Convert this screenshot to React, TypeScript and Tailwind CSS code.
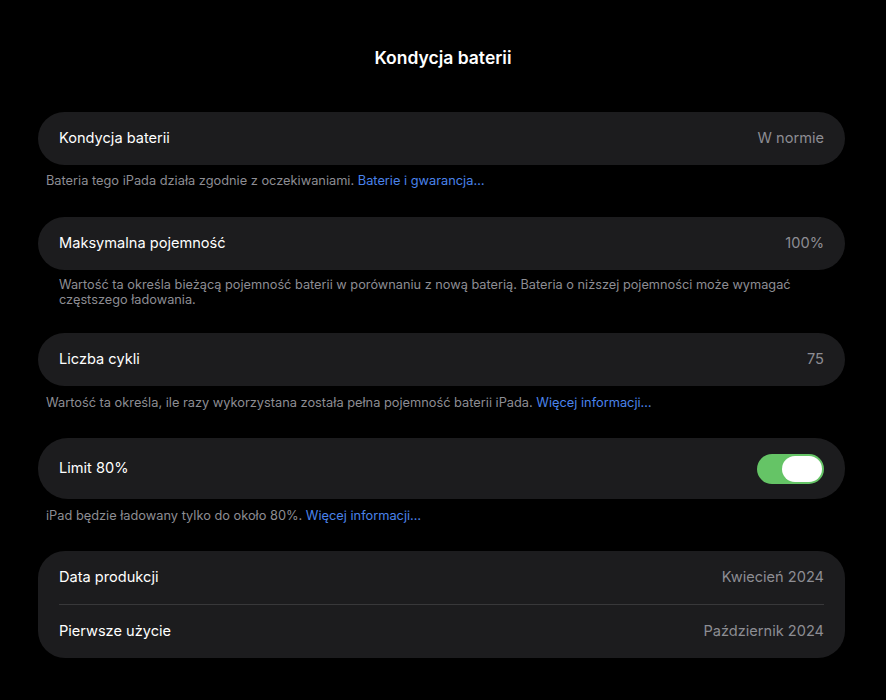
import React from "react";

function Row({ label, value }: { label: string; value: string }) {
  return (
    <div className="flex h-[53px] items-center justify-between px-[21px] pt-[1px]">
      <span className="text-[14.6px] text-white">{label}</span>
      <span className="text-[14.6px] text-[#8d8d93]">{value}</span>
    </div>
  );
}

export default function App() {
  return (
    <div
      className="min-h-[700px] w-full bg-black pb-10"
      style={{ fontFamily: "Inter, 'Noto Sans', sans-serif" }}
    >
      <div className="flex h-[112px] items-start justify-center pt-[45px]">
        <h1 className="text-[17.5px] font-semibold text-white">Kondycja baterii</h1>
      </div>

      <div className="pl-[38px] pr-[41px]">
        <div className="rounded-[27px] bg-[#1c1c1e]">
          <Row label="Kondycja baterii" value="W normie" />
        </div>
        <p className="mt-[8px] h-[44px] px-[8px] text-[12.8px] leading-[16px] text-[#8d8d93]">
          Bateria tego iPada działa zgodnie z oczekiwaniami.{" "}
          <span className="text-[#4a83ea]">Baterie i gwarancja…</span>
        </p>

        <div className="rounded-[27px] bg-[#1c1c1e]">
          <Row label="Maksymalna pojemność" value="100%" />
        </div>
        <p className="mt-[7px] h-[56px] px-[21px] text-[12.75px] leading-[15px] text-[#8d8d93]">
          Wartość ta określa bieżącą pojemność baterii w porównaniu z nową baterią. Bateria o niższej pojemności może wymagać częstszego ładowania.
        </p>

        <div className="rounded-[27px] bg-[#1c1c1e]">
          <Row label="Liczba cykli" value="75" />
        </div>
        <p className="mt-[9px] h-[43px] px-[8px] text-[12.8px] leading-[16px] text-[#8d8d93]">
          Wartość ta określa, ile razy wykorzystana została pełna pojemność baterii iPada.{" "}
          <span className="text-[#4a83ea]">Więcej informacji…</span>
        </p>

        <div className="flex h-[61px] items-center justify-between rounded-[30px] bg-[#1c1c1e] px-[21px]">
          <span className="text-[14.6px] text-white">Limit 80%</span>
          <div className="flex h-[30px] w-[67px] items-center justify-end rounded-full bg-[#65c466] p-[2px]">
            <div className="h-[26px] w-[40px] rounded-full bg-white" />
          </div>
        </div>
        <p className="mt-[9px] h-[43px] px-[8px] text-[12.8px] leading-[16px] text-[#8d8d93]">
          iPad będzie ładowany tylko do około 80%.{" "}
          <span className="text-[#4a83ea]">Więcej informacji…</span>
        </p>

        <div className="rounded-[27px] bg-[#1c1c1e]">
          <Row label="Data produkcji" value="Kwiecień 2024" />
          <div className="mx-[21px] h-px bg-[#38383a]" />
          <Row label="Pierwsze użycie" value="Październik 2024" />
        </div>
      </div>
    </div>
  );
}
